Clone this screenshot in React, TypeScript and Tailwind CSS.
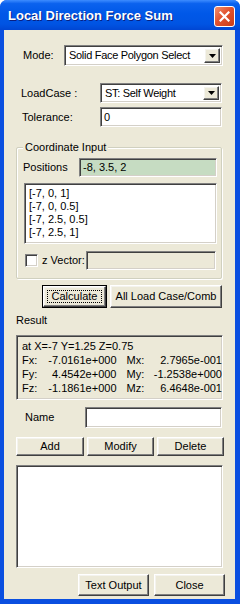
import type { ReactNode } from 'react'

const font = { fontFamily: 'Tahoma, "Liberation Sans", Arial, sans-serif' }

const sunken =
  'border border-t-[#808080] border-l-[#808080] border-r-white border-b-white shadow-[inset_1px_1px_0_#404040,inset_-1px_-1px_0_#d4d0c8]'
const raised =
  'border border-t-white border-l-white border-r-[#404040] border-b-[#404040] shadow-[inset_-1px_-1px_0_#808080,inset_1px_1px_0_#f4f3ee] bg-[#ECE9D8]'

const Button = ({ label, className = '', focused = false }: { label: string; className?: string; focused?: boolean }) => (
  <div className={`${focused ? 'border border-black' : ''} ${className}`}>
    <div className={`${raised} flex h-full w-full items-center justify-center p-[3px]`}>
      <span
        className={`flex h-full w-full items-center justify-center text-[11px] text-black ${
          focused ? 'border border-dotted border-black' : ''
        }`}
      >
        {label}
      </span>
    </div>
  </div>
)

const Select = ({ value, className = '' }: { value: string; className?: string }) => (
  <div className={`${sunken} flex items-center bg-white p-[2px] ${className}`}>
    <span className="flex-1 truncate pl-[2px] text-[11px] tracking-[-0.3px] text-black">{value}</span>
    <div className={`${raised} flex h-full w-[16px] items-center justify-center`}>
      <svg width="7" height="4" viewBox="0 0 7 4">
        <path d="M0 0h7L3.5 4z" fill="#000" />
      </svg>
    </div>
  </div>
)

const Field = ({ value = '', className = '', children }: { value?: string; className?: string; children?: ReactNode }) => (
  <div className={`${sunken} flex items-center px-[3px] text-[11px] text-black ${className}`}>
    {children ?? value}
  </div>
)

const ResultLine = ({ a, av, b, bv }: { a: string; av: string; b: string; bv: string }) => (
  <div className="flex h-[14px] items-center whitespace-nowrap">
    <span className="w-[18px]">{a}</span>
    <span className="w-[78px] text-right">{av}</span>
    <span className="ml-[10px] w-[22px]">{b}</span>
    <span className="w-[75px] text-right">{bv}</span>
  </div>
)

export default function App() {
  return (
    <div style={font} className="flex h-[604px] w-[240px] flex-col overflow-hidden rounded-t-[7px] bg-[#0A4FE0]">
      <div className="relative h-[30px] shrink-0 bg-[linear-gradient(to_bottom,#3d8cff_0%,#0b62ee_12%,#0058e8_45%,#0054e3_80%,#0046d3_100%)]">
        <span className="absolute left-[8px] top-[8px] text-[13px] font-bold leading-[15px] text-white [text-shadow:1px_1px_0_#0a1f80]">
          Local Direction Force Sum
        </span>
        <div className="absolute left-[214px] top-[6px] flex h-[21px] w-[21px] items-center justify-center rounded-[3px] border border-white bg-[linear-gradient(135deg,#f0906f_0%,#e2532f_45%,#c93c17_100%)]">
          <svg width="11" height="11" viewBox="0 0 11 11">
            <path d="M1.5 1.5l8 8M9.5 1.5l-8 8" stroke="#fff" strokeWidth="2.2" strokeLinecap="square" />
          </svg>
        </div>
      </div>

      <div className="mb-[5px] ml-[4px] mr-[5px] flex flex-1 flex-col bg-[#ECE9D8] text-[11px] text-black">
        <div className="mt-[15px] flex h-[21px] items-center">
          <span className="ml-[19px] w-[41px]">Mode:</span>
          <Select value="Solid Face Polygon Select" className="h-[21px] w-[159px]" />
        </div>

        <div className="mt-[17px] flex h-[20px] items-center">
          <span className="ml-[17px] w-[79px]">LoadCase :</span>
          <Select value="ST: Self Weight" className="h-[20px] w-[122px]" />
        </div>

        <div className="mt-[4px] flex h-[20px] items-center">
          <span className="ml-[18px] w-[78px]">Tolerance:</span>
          <Field value="0" className="h-[20px] w-[122px] bg-white" />
        </div>

        <div className="relative ml-[12px] mt-[20px] h-[132px] w-[206px] rounded-[2px] border border-[#D0D0BF] shadow-[inset_1px_1px_0_#fff,1px_1px_0_#fff]">
          <span className="absolute -top-[8px] left-[6px] bg-[#ECE9D8] px-[2px] leading-[14px]">Coordinate Input</span>
          <div className="ml-[6px] mt-[10px] flex h-[19px] items-center">
            <span className="w-[56px]">Positions</span>
            <Field value="-8, 3.5, 2" className="h-[19px] w-[138px] bg-[#C6DCC2]" />
          </div>
          <div className={`${sunken} ml-[7px] mt-[6px] h-[61px] w-[193px] bg-white px-[4px] pt-[3px] leading-[13px]`}>
            <div>[-7, 0, 1]</div>
            <div>[-7, 0, 0.5]</div>
            <div>[-7, 2.5, 0.5]</div>
            <div>[-7, 2.5, 1]</div>
          </div>
          <div className="ml-[8px] mt-[7px] flex h-[19px] items-center">
            <div className={`${sunken} h-[13px] w-[13px] bg-white`} />
            <span className="ml-[4px] w-[44px]">z Vector:</span>
            <Field className="h-[19px] w-[130px] bg-[#ECE9D8]" />
          </div>
        </div>

        <div className="ml-[38px] mt-[6px] flex h-[23px]">
          <Button label="Calculate" focused className="h-[23px] w-[65px]" />
          <Button label="All Load Case/Comb" className="ml-[3px] h-[23px] w-[112px]" />
        </div>

        <div className="ml-[12px] mt-[5px] leading-[14px]">Result</div>

        <div className={`${sunken} ml-[12px] mt-[8px] h-[65px] w-[207px] overflow-hidden bg-[#ECE9D8] pl-[5px] pt-[3px]`}>
          <div className="flex h-[14px] items-center">at X=-7 Y=1.25 Z=0.75</div>
          <ResultLine a="Fx:" av="-7.0161e+000" b="Mx:" bv="2.7965e-001" />
          <ResultLine a="Fy:" av="4.4542e+000" b="My:" bv="-1.2538e+000" />
          <ResultLine a="Fz:" av="-1.1861e+000" b="Mz:" bv="6.4648e-001" />
        </div>

        <div className="mt-[7px] flex h-[21px] items-center">
          <span className="ml-[21px] w-[60px]">Name</span>
          <Field className="h-[21px] w-[137px] bg-white" />
        </div>

        <div className="ml-[12px] mt-[9px] flex h-[19px] gap-[3px]">
          <Button label="Add" className="h-[19px] w-[68px]" />
          <Button label="Modify" className="h-[19px] w-[67px]" />
          <Button label="Delete" className="h-[19px] w-[67px]" />
        </div>

        <div className={`${sunken} ml-[12px] mt-[9px] h-[103px] w-[207px] bg-white`} />

        <div className="ml-[74px] mt-[6px] flex h-[22px] gap-[5px]">
          <Button label="Text Output" className="h-[22px] w-[71px]" />
          <Button label="Close" className="h-[22px] w-[71px]" />
        </div>
      </div>
    </div>
  )
}
